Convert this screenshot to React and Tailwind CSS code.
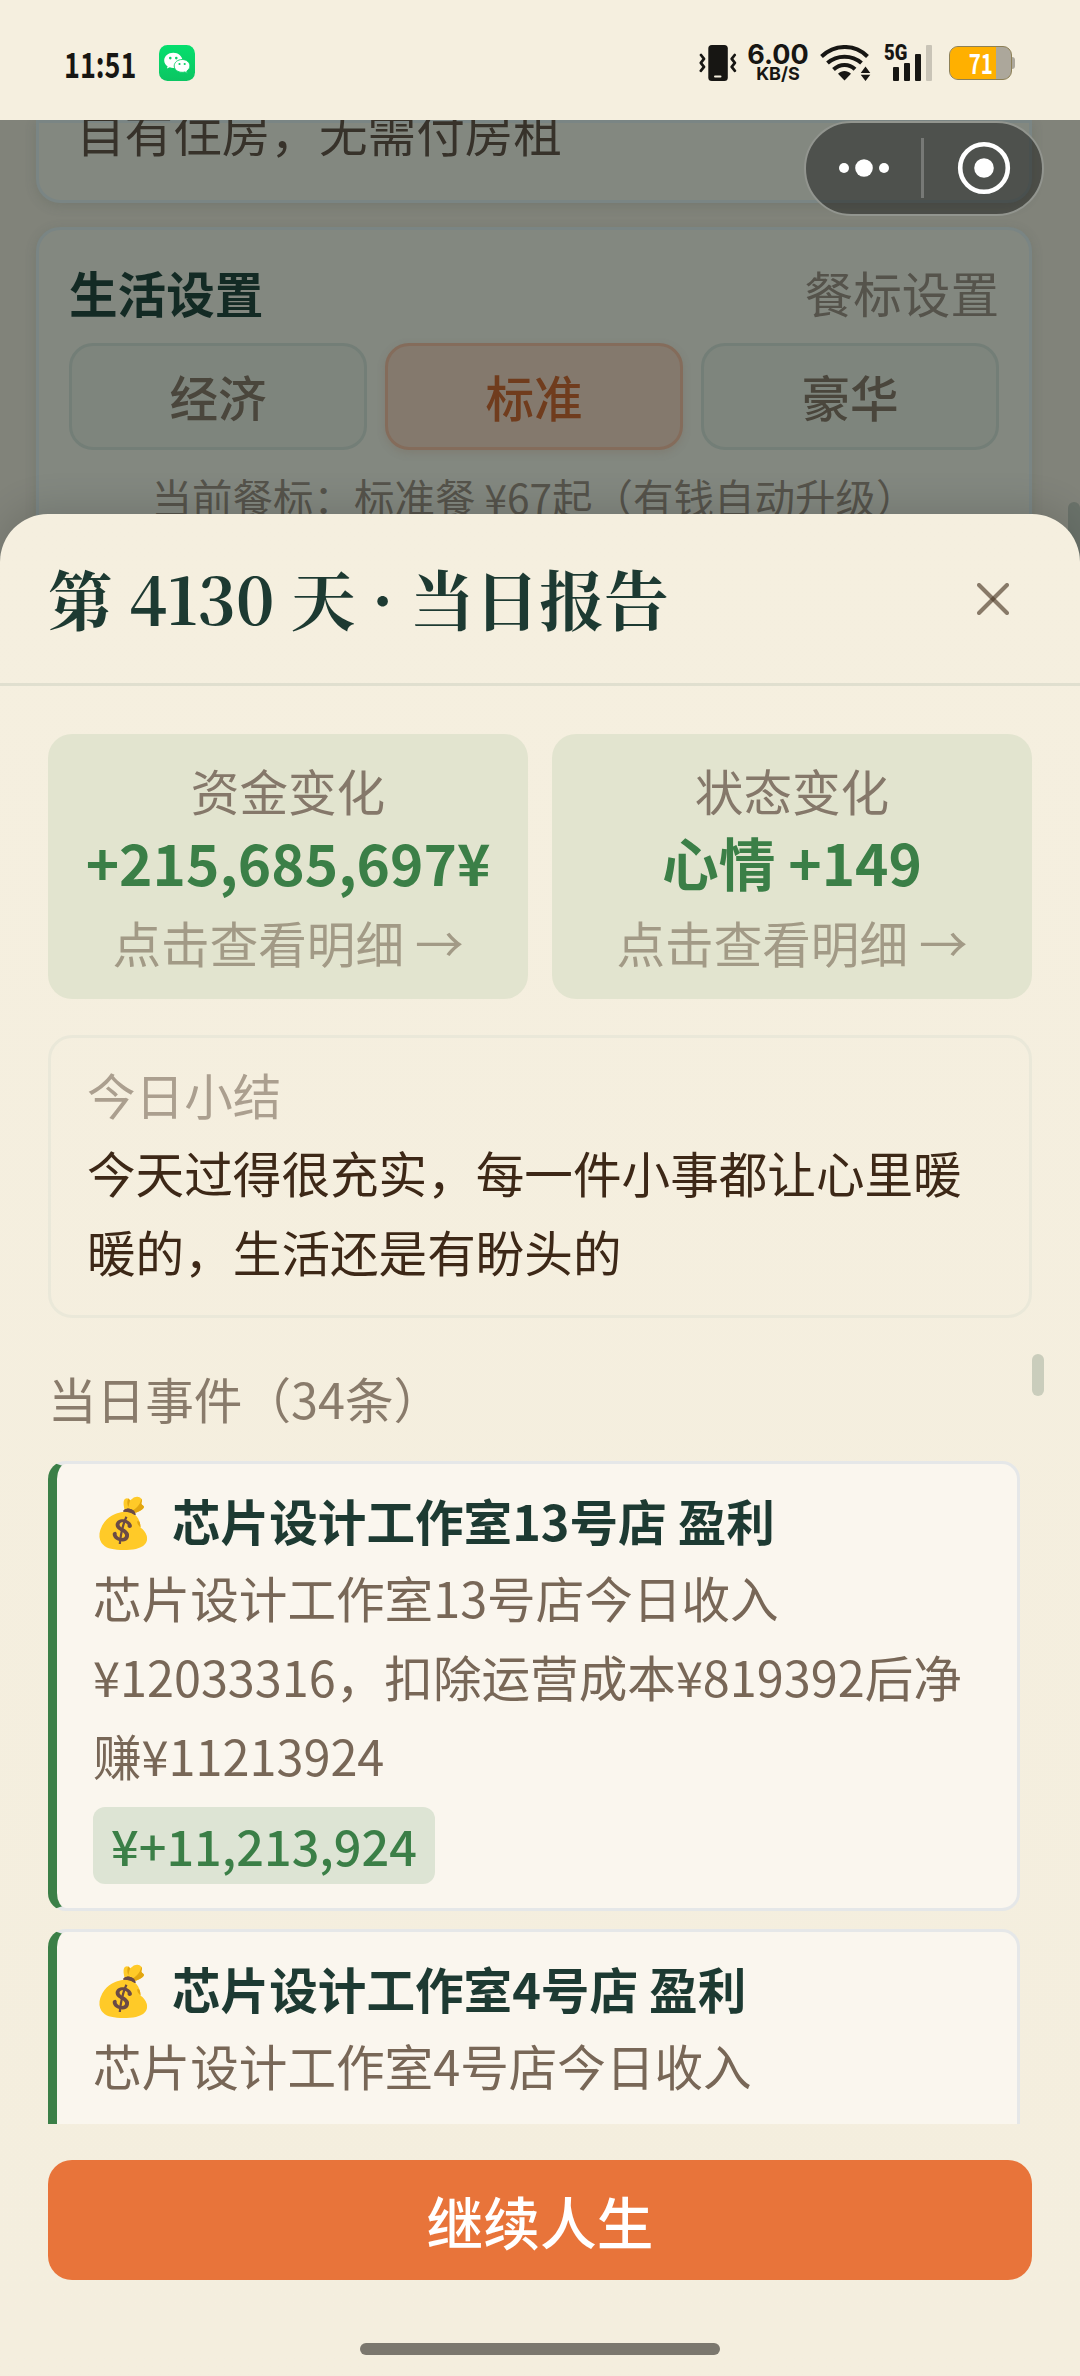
import React from "react";

const SANS = "font-['Noto_Sans_CJK_SC',sans-serif]";

function WeChatIcon() {
  return (
    <svg className="ml-[26px] h-9 w-9" viewBox="0 0 36 36">
      <defs>
        <linearGradient id="wx" x1="0" y1="0" x2="0" y2="1">
          <stop offset="0" stopColor="#05df6d" />
          <stop offset="1" stopColor="#0bc562" />
        </linearGradient>
      </defs>
      <rect width="36" height="36" rx="8.5" fill="url(#wx)" />
      <path d="M14.3 7.8c-5.1 0-9.1 3.4-9.1 7.6 0 2.4 1.3 4.5 3.4 5.9l-.7 2.3 2.900-1.300c1 .4 2.200.6 3.500.6 4.900 0 9.100-3.400 9.100-7.500s-4.100-7.600-9.100-7.600z" fill="#fff" />
      <path d="M23.200 14.500c-4.500 0-8 2.900-8 6.400s3.500 6.400 8 6.400c1 0 1.900-.1 2.700-.4l2.400 1.300-.5-2.200c1.900-1.200 3.100-3 3.100-5.100 0-3.500-3.300-6.400-7.700-6.400z" fill="#fff" stroke="#0ad067" strokeWidth="0.900" />
      <g fill="#0ad067">
        <circle cx="11.300" cy="13.100" r="1.300" />
        <circle cx="17.300" cy="13.100" r="1.300" />
        <circle cx="20.500" cy="19" r="1.100" />
        <circle cx="25.700" cy="19" r="1.100" />
      </g>
    </svg>
  );
}

function VibrateIcon() {
  return (
    <svg className="h-9 w-[38px]" viewBox="0 0 38 36" fill="none">
      <rect x="9.300" y="0" width="19.500" height="36" rx="3.500" fill="#171613" />
      <rect x="15" y="30.500" width="7.500" height="2" rx="1" fill="#f5efdf" />
      <path d="M2 10l3 3.800-3.200 4 3.200 4-3.200 4M35.700 10l-3 3.800 3.200 4-3.200 4 3.200 4" stroke="#171613" strokeWidth="2.700" strokeLinecap="round" strokeLinejoin="round" />
    </svg>
  );
}

function WifiIcon() {
  return (
    <svg className="h-9 w-[52px]" viewBox="0 0 52 36" fill="none">
      <g stroke="#171613" strokeWidth="4">
        <path d="M1.500 11.500C15-1.200 35-1.200 47.500 11.500" />
        <path d="M7.500 18c9.500-8.500 24.500-8.500 34 0" />
        <path d="M13.500 24.500c6.500-6 15.500-6.200 21.500-.3" />
      </g>
      <path d="M18 28.800c4-3.700 9-3.700 13 0L24.500 35.500z" fill="#171613" />
      <path d="M45.500 21.500l4.800 6.500h-9.600zM45.500 36l4.800-6.300h-9.600z" fill="#171613" />
    </svg>
  );
}

function SignalIcon() {
  return (
    <div className="relative ml-[12px] h-9 w-[50px]">
      <span className="absolute left-0 top-[-3px] origin-left scale-x-[0.840] font-['Roboto',sans-serif] text-[22px] font-black leading-[22px] text-[#171613]">
        5G
      </span>
      <div className="flex h-9 items-end justify-end gap-[5px] pr-[2px]">
        <i className="h-[14px] w-[6px] rounded-[1px] bg-[#171613]" />
        <i className="h-[18px] w-[6px] rounded-[1px] bg-[#171613]" />
        <i className="h-[27px] w-[6px] rounded-[1px] bg-[#171613]" />
        <i className="h-9 w-[6px] rounded-[1px] bg-[#c9c4b7]" />
      </div>
    </div>
  );
}

function Battery() {
  return (
    <div className="ml-[15px] flex items-center">
      <div className="flex h-[34px] w-[63px] rounded-[9px] border border-[#8d8056] bg-[#aca79b]">
        <div className="flex w-[46px] items-center justify-end rounded-l-[8px] bg-[#ffb000] pr-[3px]">
          <span className="origin-right scale-x-[0.760] text-[27px] font-bold leading-[30px] text-white">71</span>
        </div>
      </div>
      <i className="h-[12px] w-[3px] rounded-r-[3px] bg-[#aca79b]" />
    </div>
  );
}

function StatusBar() {
  return (
    <header className="relative z-30 flex h-[120px] shrink-0 items-center bg-[#f5efdf] pl-[64px] pr-[65px] pt-[6px]">
      <span className="w-[69px] origin-left scale-x-[0.770] whitespace-nowrap text-[35px] font-bold leading-[36px] text-[#171613]">
        11:51
      </span>
      <WeChatIcon />
      <div className="ml-auto flex items-center">
        <VibrateIcon />
        <div className="ml-[10px] mr-[11px] flex w-[62px] flex-col items-center font-['Inter',sans-serif] text-[#171613]">
          <span className="text-[27px] font-bold leading-[22px]">6.00</span>
          <span className="text-[18px] font-bold leading-[16px]">KB/S</span>
        </div>
        <WifiIcon />
        <SignalIcon />
        <Battery />
      </div>
    </header>
  );
}

function Capsule() {
  return (
    <div className="absolute right-9 top-[1px] z-20 flex h-[95px] w-[240px] items-center rounded-full border-2 border-[#92958f] bg-black/40">
      <svg className="h-full w-full" viewBox="0 0 236 91">
        <g fill="#fff">
          <circle cx="38" cy="45" r="5" />
          <circle cx="58" cy="45" r="8.800" />
          <circle cx="78" cy="45" r="5" />
          <circle cx="178" cy="45" r="9.800" />
        </g>
        <circle cx="178" cy="45" r="23.800" fill="none" stroke="#fff" strokeWidth="4.600" />
        <rect x="115" y="15" width="3" height="60" fill="#777976" />
      </svg>
    </div>
  );
}

const CARD = "border-[3px] border-[#7a8584] bg-[#838880] shadow-[0_3px_12px_rgba(70,80,70,0.2)]";

function Backdrop() {
  return (
    <main className="flex flex-col gap-6 pl-9 pr-12">
      <section className={"flex h-[83px] items-start rounded-b-[24px] pl-[37px] " + CARD}>
        <p className="mt-[-31px] text-[48.600px] leading-[79px] text-[#37322a]">自有住房，无需付房租</p>
      </section>
      <section className={"h-[400px] rounded-[24px] px-[30px] pt-[23px] " + CARD}>
        <div className="flex items-center justify-between text-[48.600px] leading-[79px]">
          <h2 className="font-bold text-[#132a24]">生活设置</h2>
          <span className="text-[#55534b]">餐标设置</span>
        </div>
        <div className="mt-[11px] grid grid-cols-3 gap-[18px] text-[48.600px] font-medium">
          <button className="h-[107px] rounded-[24px] border-[3px] border-[#737e77] bg-[#7e857d] text-[#4a463c]">经济</button>
          <button className="h-[107px] rounded-[24px] border-[3px] border-[#846c5b] bg-[#84796d] text-[#703c1d] shadow-[0_3px_9px_rgba(110,80,60,0.2)]">标准</button>
          <button className="h-[107px] rounded-[24px] border-[3px] border-[#737e77] bg-[#7e857d] text-[#4a463c]">豪华</button>
        </div>
        <p className="mt-[17px] text-center text-[40.500px] leading-[60px] text-[#55534b]">当前餐标：标准餐 ¥67起（有钱自动升级）</p>
      </section>
    </main>
  );
}

function ChangePanel({ label, value }) {
  return (
    <div className="flex h-[265px] flex-1 flex-col items-center rounded-[24px] bg-[#e2e4cf] pt-[20px] text-[48.600px]">
      <span className="leading-[72px] text-[#85786a]">{label}</span>
      <span className="mt-[-1px] whitespace-nowrap text-[56.700px] font-bold leading-[72px] text-[#3b7f47]">{value}</span>
      <span className="mt-[9px] leading-[72px] text-[#a29a86]">点击查看明细 →</span>
    </div>
  );
}

function EventCard({ title, lines, amount }) {
  return (
    <article className="flex h-[450px] shrink-0 flex-col items-start rounded-[18px] border-[3px] border-l-[9px] border-[#e5e7e8] border-l-[#3b7f47] bg-[#faf6ee] pl-9 pt-[17px] text-[48.600px] leading-[79px]">
      <h3 className="mb-[-2px] flex h-[79px] whitespace-nowrap font-bold text-[#1d3a32]">
        <span className="w-[79px] pt-[3px] font-['Noto_Color_Emoji']">💰</span>
        {title}
      </h3>
      {lines.map((line) => (
        <p key={line} className="whitespace-nowrap text-[#786757]">{line}</p>
      ))}
      {amount && (
        <span className="mt-[12px] h-[77px] rounded-[12px] bg-[#dde4d4] px-[18px] font-medium leading-[77px] text-[#3b7f47]">
          {amount}
        </span>
      )}
    </article>
  );
}

function ReportSheet() {
  return (
    <div className="absolute inset-x-0 bottom-0 z-10 flex h-[1862px] flex-col rounded-t-[48px] bg-gradient-to-b from-[#f5efdf] to-[#f4eede] shadow-[0_-9px_36px_rgba(0,0,0,0.12)]">
      <div className="flex h-[172px] shrink-0 items-center justify-between border-b-[3px] border-[#e0dfcf] pl-12 pr-[71px]">
        <h1 className="mt-[-3px] whitespace-nowrap font-['Noto_Serif_CJK_SC','Noto_Serif_SC','Liberation_Serif','Noto_Sans_CJK_SC',serif] text-[64.800px] font-bold leading-[84px] text-[#1d3a32]">
          第 4130 天 · 当日报告
        </h1>
        <svg className="h-8 w-8" viewBox="0 0 32 32" stroke="#4d3a28" strokeOpacity="0.650" strokeWidth="4" strokeLinecap="round">
          <path d="M2 2l28 28" />
          <path d="M30 2L2 30" />
        </svg>
      </div>

      <div className="relative flex h-[1438px] shrink-0 flex-col overflow-hidden px-12 pt-12">
        <div className="flex shrink-0 gap-6">
          <ChangePanel label="资金变化" value="+215,685,697¥" />
          <ChangePanel label="状态变化" value="心情 +149" />
        </div>
        <section className="mt-9 h-[283px] shrink-0 rounded-[24px] border-[3px] border-[#eae8d9] pl-9 pt-[17px] text-[48.600px] leading-[79px]">
          <h2 className="text-[#ab9f8f]">今日小结</h2>
          <p className="mt-[-1px] whitespace-nowrap text-[#3d2817]">今天过得很充实，每一件小事都让心里暖</p>
          <p className="whitespace-nowrap text-[#3d2817]">暖的，生活还是有盼头的</p>
        </section>
        <h2 className="mt-[41px] shrink-0 text-[48.600px] leading-[79px] text-[#897b6b]">当日事件（34条）</h2>
        <div className="mt-[23px] flex flex-col gap-[18px] pr-3">
          <EventCard
            title="芯片设计工作室13号店 盈利"
            lines={["芯片设计工作室13号店今日收入", "¥12033316，扣除运营成本¥819392后净", "赚¥11213924"]}
            amount="¥+11,213,924"
          />
          <EventCard title="芯片设计工作室4号店 盈利" lines={["芯片设计工作室4号店今日收入"]} />
        </div>
        <i className="absolute right-9 top-[668px] h-[42px] w-3 rounded-full bg-[#cacdbc]" />
      </div>

      <button className="mx-12 mt-9 h-[120px] shrink-0 rounded-[24px] bg-[#e8743a] text-[56.700px] font-medium leading-[119px] text-white">
        继续人生
      </button>
      <i className="mx-auto mt-[63px] h-3 w-[360px] shrink-0 rounded-full bg-[#7b776e]" />
    </div>
  );
}

export default function App() {
  return (
    <div className={"relative flex h-[2376px] w-[1080px] flex-col overflow-hidden bg-[#81837a] " + SANS}>
      <StatusBar />
      <div className="relative flex-1">
        <Backdrop />
        <i className="absolute right-0 top-[382px] h-[180px] w-3 rounded-full bg-[#6a726a]" />
        <Capsule />
      </div>
      <ReportSheet />
    </div>
  );
}
